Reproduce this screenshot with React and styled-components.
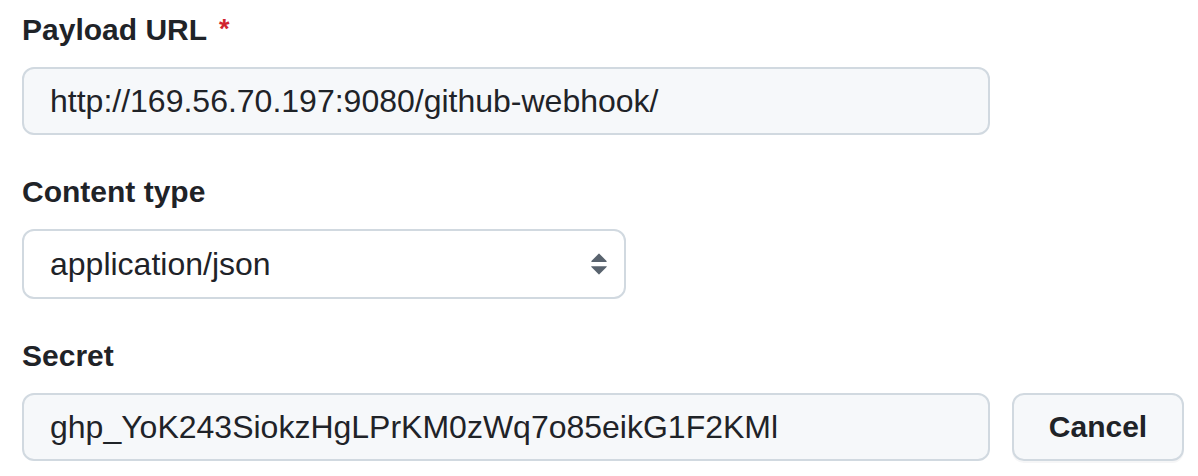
import React from "react";
import styled, { createGlobalStyle } from "styled-components";

const GlobalStyle = createGlobalStyle`
  body {
    margin: 0;
    background: #fff;
    font-family: "Liberation Sans", Arial, sans-serif;
    color: #1f2328;
  }
`;

const Page = styled.div`
  padding: 7px 0 0 22px;
`;

const FormGroup = styled.div`
  margin-bottom: 34px;
`;

const Label = styled.label`
  display: block;
  font-size: 30px;
  line-height: 45px;
  font-weight: 700;
  margin-bottom: 15px;
`;

const Required = styled.span`
  color: #d1242f;
  margin-left: 12px;
  font-size: 27px;
  vertical-align: 2px;
`;

const TextInput = styled.input`
  box-sizing: border-box;
  width: 968px;
  height: 68px;
  flex: none;
  padding: 0 26px;
  border: 2px solid #d1d9e0;
  border-radius: 12px;
  background: #f6f8fa;
  font-family: "Liberation Sans", Arial, sans-serif;
  font-size: 32px;
  color: #1f2328;
  outline: none;
`;

const SelectWrap = styled.div`
  position: relative;
  width: 604px;
`;

const Select = styled.select`
  box-sizing: border-box;
  display: block;
  width: 100%;
  height: 70px;
  padding: 0 60px 0 26px;
  border: 2px solid #d1d9e0;
  border-radius: 12px;
  background: #fff;
  font-family: "Liberation Sans", Arial, sans-serif;
  font-size: 32px;
  color: #1f2328;
  appearance: none;
  -webkit-appearance: none;
  outline: none;
`;

const Arrow = styled.svg`
  position: absolute;
  right: 10px;
  top: 18px;
  pointer-events: none;
`;

const Row = styled.div`
  display: flex;
  align-items: center;
  gap: 22px;
`;

const Button = styled.button`
  box-sizing: border-box;
  width: 172px;
  height: 68px;
  border: 2px solid #d1d9e0;
  border-radius: 12px;
  background: #f6f8fa;
  box-shadow: 0 2px 0 rgba(31, 35, 40, 0.04);
  font-family: "Liberation Sans", Arial, sans-serif;
  font-size: 30px;
  font-weight: 700;
  color: #1f2328;
  cursor: pointer;
`;

export default function App() {
  return (
    <>
      <GlobalStyle />
      <Page>
        <FormGroup>
          <Label>
            Payload URL<Required>*</Required>
          </Label>
          <TextInput readOnly value="http://169.56.70.197:9080/github-webhook/" />
        </FormGroup>

        <FormGroup>
          <Label>Content type</Label>
          <SelectWrap>
            <Select defaultValue="json">
              <option value="json">application/json</option>
              <option value="form">application/x-www-form-urlencoded</option>
            </Select>
            <Arrow width="34" height="34" viewBox="0 0 16 16" fill="#59636e">
              <path d="M4.427 9.427l3.396 3.396a.25.25 0 00.354 0l3.396-3.396A.25.25 0 0011.396 9H4.604a.25.25 0 00-.177.427zM4.427 6.573l3.396-3.396a.25.25 0 01.354 0l3.396 3.396A.25.25 0 0111.396 7H4.604a.25.25 0 01-.177-.427z" />
            </Arrow>
          </SelectWrap>
        </FormGroup>

        <FormGroup>
          <Label>Secret</Label>
          <Row>
            <TextInput readOnly value="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" />
            <Button>Cancel</Button>
          </Row>
        </FormGroup>
      </Page>
    </>
  );
}
